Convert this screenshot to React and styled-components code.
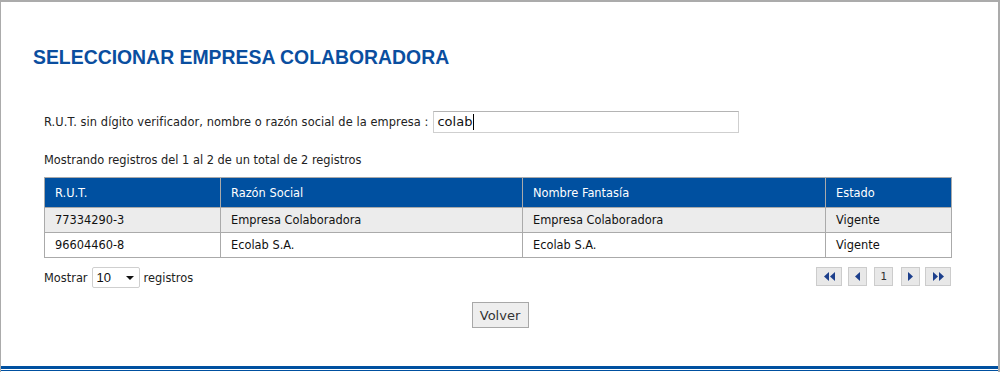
import React from "react";
import styled, { createGlobalStyle } from "styled-components";

const GlobalStyle = createGlobalStyle`
  html, body {
    margin: 0;
    padding: 0;
    background: #ffffff;
  }
  body {
    font-family: "DejaVu Sans", Verdana, sans-serif;
    font-size: 11.4px;
    color: #222;
  }
`;

const rows = [
  { rut: "77334290-3", razon: "Empresa Colaboradora", fantasia: "Empresa Colaboradora", estado: "Vigente" },
  { rut: "96604460-8", razon: "Ecolab S.A.", fantasia: "Ecolab S.A.", estado: "Vigente" },
];

export default function App() {
  return (
    <>
      <GlobalStyle />
      <Frame>
        <Content>
          <Title>SELECCIONAR EMPRESA COLABORADORA</Title>

          <SearchRow>
            <SearchLabel>R.U.T. sin dígito verificador, nombre o razón social de la empresa :</SearchLabel>
            <FakeInput>
              colab<Caret />
            </FakeInput>
          </SearchRow>

          <Info>Mostrando registros del 1 al 2 de un total de 2 registros</Info>

          <Table>
            <colgroup>
              <col style={{ width: 176 }} />
              <col style={{ width: 302 }} />
              <col style={{ width: 303 }} />
              <col />
            </colgroup>
            <thead>
              <tr>
                <th>R.U.T.</th>
                <th>Razón Social</th>
                <th>Nombre Fantasía</th>
                <th>Estado</th>
              </tr>
            </thead>
            <tbody>
              {rows.map((r, i) => (
                <Row key={r.rut} $odd={i % 2 === 0}>
                  <td>{r.rut}</td>
                  <td>{r.razon}</td>
                  <td>{r.fantasia}</td>
                  <td>{r.estado}</td>
                </Row>
              ))}
            </tbody>
          </Table>

          <Footer>
            <Length>
              Mostrar
              <Select>
                <span>10</span>
                <Arrow />
              </Select>
              registros
            </Length>
            <Pager>
              <PageBtn $wide $after={6}>
                <Tri dir="left" />
                <Tri dir="left" />
              </PageBtn>
              <PageBtn $after={7}>
                <Tri dir="left" />
              </PageBtn>
              <PageBtn $after={8}>1</PageBtn>
              <PageBtn $after={5}>
                <Tri dir="right" />
              </PageBtn>
              <PageBtn $wide>
                <Tri dir="right" />
                <Tri dir="right" />
              </PageBtn>
            </Pager>
          </Footer>

          <Actions>
            <Button>Volver</Button>
          </Actions>
        </Content>
        <BottomRule />
      </Frame>
    </>
  );
}

function Tri({ dir }) {
  return (
    <svg width="5" height="9" viewBox="0 0 5 9">
      {dir === "left" ? (
        <polygon points="5,0 5,9 0,4.5" fill="#1c3f8c" />
      ) : (
        <polygon points="0,0 0,9 5,4.5" fill="#1c3f8c" />
      )}
    </svg>
  );
}

const Frame = styled.div`
  box-sizing: border-box;
  width: 1000px;
  height: 372px;
  border-top: 2px solid #ababab;
  border-left: 1px solid #ababab;
  border-right: 2px solid #ababab;
  display: flex;
  flex-direction: column;
`;

const Content = styled.div`
  flex: 1;
  padding: 0 47px 0 43px;
`;

const Title = styled.h1`
  margin: 43px 0 0 -11px;
  font-family: "Liberation Sans", Arial, sans-serif;
  font-weight: bold;
  font-size: 19.4px;
  line-height: 24px;
  color: #0a4e9f;
`;

const SearchRow = styled.div`
  display: flex;
  align-items: center;
  gap: 5px;
  margin-top: 42px;
  height: 22px;
`;

const SearchLabel = styled.label`
  letter-spacing: 0.09px;
`;

const FakeInput = styled.div`
  box-sizing: border-box;
  width: 306px;
  height: 22px;
  border: 1px solid #cfcfcf;
  border-top-color: #b4b4b4;
  padding: 0 3px;
  font-size: 13px;
  line-height: 20px;
  color: #111;
  display: flex;
  align-items: center;
`;

const Caret = styled.span`
  display: inline-block;
  width: 1px;
  height: 16px;
  background: #000;
  margin-left: 1px;
`;

const Info = styled.div`
  margin-top: 20px;
  line-height: 14px;
`;

const Table = styled.table`
  margin-top: 10px;
  width: 908px;
  border-collapse: collapse;
  table-layout: fixed;

  th,
  td {
    border: 1px solid #aaaaaa;
    padding: 0 10px;
    text-align: left;
    font-weight: normal;
    white-space: nowrap;
  }
  th {
    background: #0050a0;
    color: #ffffff;
    height: 29px;
  }
  td {
    height: 24px;
    color: #111;
  }
`;

const Row = styled.tr`
  background: ${(p) => (p.$odd ? "#ececec" : "#ffffff")};
`;

const Footer = styled.div`
  display: flex;
  justify-content: space-between;
  align-items: center;
  width: 908px;
  margin-top: 7px;
`;

const Length = styled.div`
  display: flex;
  align-items: center;
  gap: 4px;
  margin-top: 2px;
`;

const Select = styled.div`
  box-sizing: border-box;
  width: 48px;
  height: 21px;
  border: 1px solid #cfcfcf;
  border-radius: 2px;
  display: flex;
  align-items: center;
  justify-content: space-between;
  padding: 0 5px 0 4px;
  font-family: "Liberation Sans", Arial, sans-serif;
  font-size: 13px;
  color: #111;
`;

const Arrow = styled.span`
  width: 0;
  height: 0;
  border-left: 4px solid transparent;
  border-right: 4px solid transparent;
  border-top: 4px solid #111;
`;

const Pager = styled.div`
  display: flex;
  margin-right: 1px;
`;

const PageBtn = styled.div`
  box-sizing: border-box;
  width: ${(p) => (p.$wide ? "26px" : "19px")};
  height: 19px;
  margin-right: ${(p) => p.$after || 0}px;
  background: #e8e8e8;
  border: 1px solid #cccccc;
  display: flex;
  align-items: center;
  justify-content: center;
  gap: 1px;
  font-family: "DejaVu Sans Mono", monospace;
  font-size: 11px;
  color: #333;
`;

const Actions = styled.div`
  display: flex;
  justify-content: center;
  margin-top: 14px;
`;

const Button = styled.button`
  box-sizing: border-box;
  width: 57px;
  height: 26px;
  background: #eeeeee;
  border: 1px solid #a8a8a8;
  font-family: "DejaVu Sans", Verdana, sans-serif;
  font-size: 13px;
  color: #333;
  padding: 0;
  margin-left: 5px;
`;

const BottomRule = styled.div`
  height: 1px;
  border-top: 3px solid #0050a0;
  border-bottom: 1px solid #0050a0;
  margin-bottom: 1px;
`;
